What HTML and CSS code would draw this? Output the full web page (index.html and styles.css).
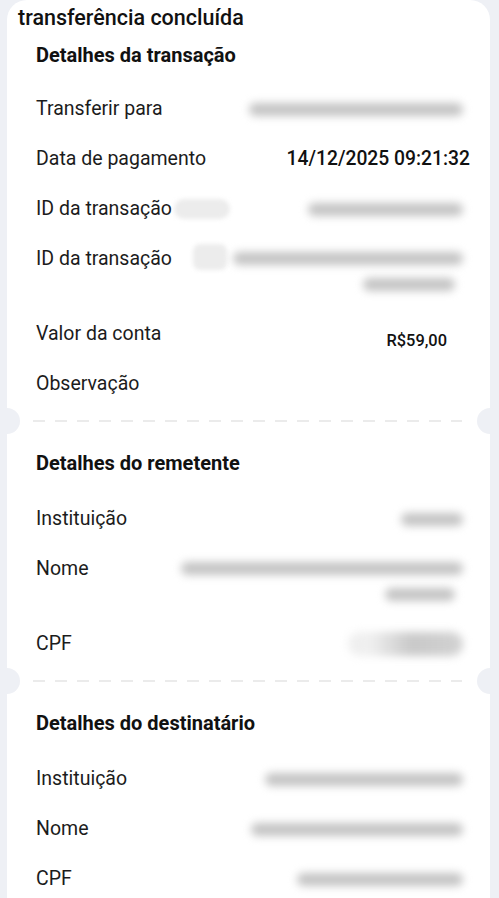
FILE: index.html
```html
<!DOCTYPE html>
<html lang="pt-BR">
<head>
  <meta charset="UTF-8">
  <meta name="viewport" content="width=device-width, initial-scale=1.0">
  <title>Transferência concluída</title>
  <link rel="stylesheet" href="styles.css">
</head>
<body>

  <div class="receipt">
    <h1 class="title">transferência concluída</h1>

    <section class="details">
      <h2>Detalhes da transação</h2>
      <div class="row">
        <span class="label">Transferir para</span>
        <span class="value"><span class="blur" style="width: 214px"></span></span>
      </div>
      <div class="row">
        <span class="label">Data de pagamento</span>
        <span class="value date">14/12/2025 09:21:32</span>
      </div>
      <div class="row">
        <span class="label">ID da transação<span class="blur light chip"></span></span>
        <span class="value"><span class="blur" style="width: 155px"></span></span>
      </div>
      <div class="row">
        <span class="label">ID da transação</span>
        <span class="value wide">
          <span class="blur light lead"></span>
          <span class="blur" style="width: 230px"></span>
          <span class="blur second" style="width: 92px"></span>
        </span>
      </div>
      <div class="row">
        <span class="label">Valor da conta</span>
        <span class="value amount">R$59,00</span>
      </div>
      <div class="row">
        <span class="label">Observação</span>
        <span class="value"></span>
      </div>
    </section>

    <div class="separator"><span class="dash"></span></div>

    <section class="details">
      <h2>Detalhes do remetente</h2>
      <div class="row">
        <span class="label">Instituição</span>
        <span class="value"><span class="blur" style="width: 62px"></span></span>
      </div>
      <div class="row">
        <span class="label">Nome</span>
        <span class="value">
          <span class="blur" style="width: 282px"></span>
          <span class="blur second" style="width: 70px"></span>
        </span>
      </div>
      <div class="row">
        <span class="label">CPF</span>
        <span class="value"><span class="blur light cpf" style="width: 115px"></span></span>
      </div>
    </section>

    <div class="separator"><span class="dash"></span></div>

    <section class="details">
      <h2>Detalhes do destinatário</h2>
      <div class="row">
        <span class="label">Instituição</span>
        <span class="value"><span class="blur" style="width: 198px"></span></span>
      </div>
      <div class="row">
        <span class="label">Nome</span>
        <span class="value"><span class="blur" style="width: 212px"></span></span>
      </div>
      <div class="row">
        <span class="label">CPF</span>
        <span class="value"><span class="blur" style="width: 166px"></span></span>
      </div>
    </section>
  </div>

</body>
</html>
```

FILE: styles.css
```css
body {
  margin: 0;
  background-color: #eef0f5;
  font-family: Roboto, "Noto Sans", Arial, sans-serif;
  color: #1c1c1c;
  overflow: hidden;
}

.receipt {
  width: 483px;
  min-height: 920px;
  margin-left: 7px;
  background-color: #fff;
  border-radius: 20px 20px 0 0;
}

.title {
  margin: 0;
  padding-left: 11px;
  font-size: 21.5px;
  font-weight: 500;
  line-height: 36px;
  color: #111;
}

.details {
  padding: 0 27px 0 29px;
}

.details h2 {
  margin: 7px 0 17px;
  font-size: 20px;
  font-weight: 700;
  line-height: 24px;
  color: #111;
}

.row {
  display: flex;
  justify-content: space-between;
  align-items: flex-start;
  padding: 13px 0;
}

.label {
  display: flex;
  align-items: center;
  font-size: 19.5px;
  line-height: 24px;
  white-space: nowrap;
}

.value {
  display: flex;
  flex-direction: column;
  align-items: flex-end;
  min-height: 24px;
  justify-content: center;
  position: relative;
}

.date {
  font-size: 19.3px;
  font-weight: 500;
  line-height: 24px;
  margin-right: -7px;
  color: #111;
}

.amount {
  font-size: 16.4px;
  font-weight: 500;
  line-height: 24px;
  margin: 7px 16px -7px 0;
  color: #111;
}

/* blurred personal data */
.blur {
  display: block;
  height: 13px;
  margin: 5px 0;
  border-radius: 7px;
  background-color: #c4c4c4;
  filter: blur(4px);
}

.blur.second {
  margin-top: 8px;
  margin-right: 8px;
}

.blur.light {
  background-color: #ececec;
}

.chip {
  width: 56px;
  height: 20px;
  margin: 0 0 0 2px;
  border-radius: 10px;
  filter: blur(2px);
}

.lead {
  position: absolute;
  left: -40px;
  top: -3px;
  width: 34px;
  height: 26px;
  margin: 0;
  filter: blur(2px);
}

.cpf {
  height: 24px;
  margin: 0;
  border-radius: 12px;
  background: linear-gradient(90deg, #efefef 20%, #c9c9c9 55%, #d2d2d2);
}

.separator {
  position: relative;
  margin-top: 11px;
  padding: 0 28px 0 26px;
}

.separator::before,
.separator::after {
  content: "";
  position: absolute;
  top: -12px;
  width: 26px;
  height: 26px;
  border-radius: 50%;
  background-color: #eef0f5;
}

.separator::before {
  left: -13px;
}

.separator::after {
  right: -13px;
}

.dash {
  display: block;
  height: 2px;
  background: repeating-linear-gradient(90deg, #ebebeb 0 12px, transparent 12px 22px);
}

.separator + .details h2 {
  margin: 29px 0 19px;
}
```
